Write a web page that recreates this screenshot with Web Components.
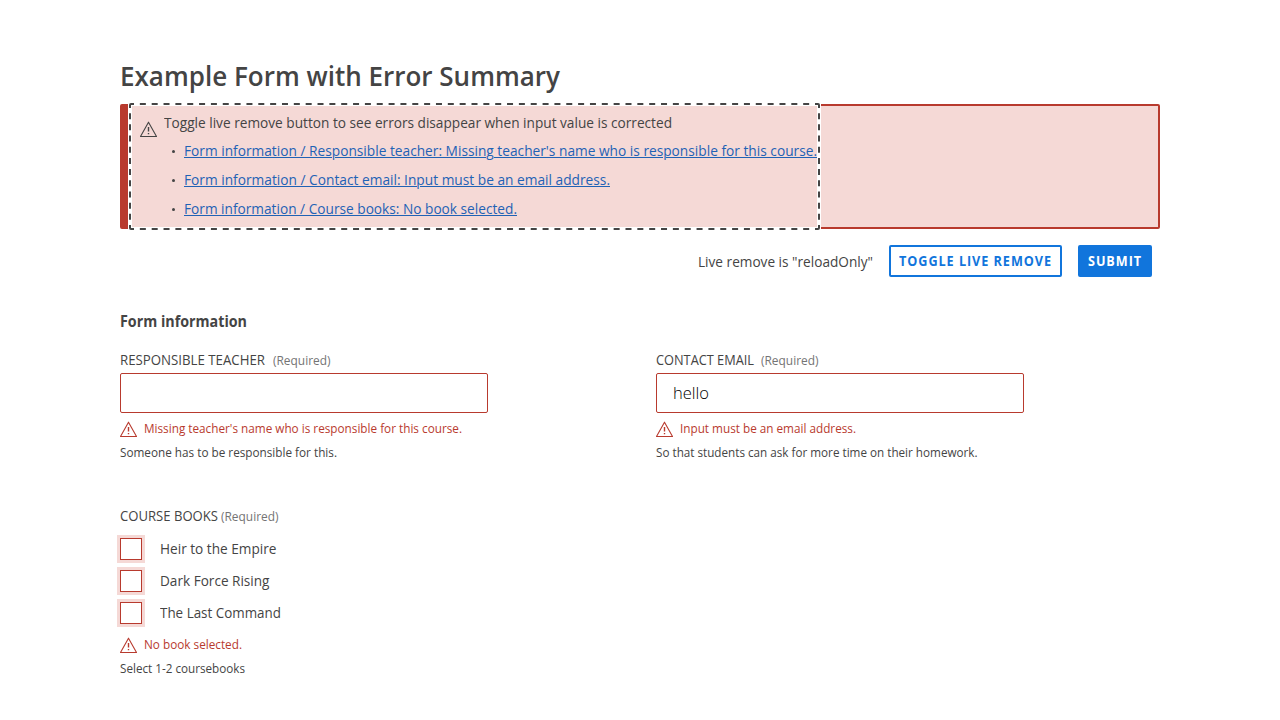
<!DOCTYPE html>
<html lang="en">
<head>
<meta charset="utf-8">
<title>Example Form with Error Summary</title>
<style>
  :root { --ink:#444; --red:#b83a2e; --pink:#f5d9d6; --blue:#1175dc; --link:#1f62b5; --muted:#747474; }
  body { margin:0; background:#fff; color:var(--ink); font-family:"Open Sans","Noto Sans",sans-serif; }
</style>
</head>
<body>
<form-page></form-page>
<script>
const define = (name, html, setup) => {
  const t = document.createElement('template');
  t.innerHTML = html;
  customElements.define(name, class extends HTMLElement {
    connectedCallback() {
      if (this.shadowRoot) return;
      this.attachShadow({ mode:'open' }).append(t.content.cloneNode(true));
      if (setup) setup(this, this.shadowRoot);
    }
  });
};

/* Text set to a given measure by adjusting its horizontal scale. */
define('fit-text', `
  <style>
    :host { display:inline-block; white-space:nowrap; font-size:14px; flex:none }
    span { display:inline-block; transform-origin:0 50% }
    :host([underline]) span { text-decoration:underline; text-decoration-thickness:1px; text-underline-offset:1px }
  </style><span><slot></slot></span>`, (host, root) => {
    const w = +host.getAttribute('w'), s = root.querySelector('span');
    const natural = s.getBoundingClientRect().width;
    if (natural) s.style.transform = `scaleX(${w / natural})`;
    host.style.width = w + 'px';
});

define('warning-icon', `
  <style>:host { display:block; width:17px; height:16px; flex:none } svg { display:block }</style>
  <svg width="17" height="16" viewBox="0 0 17 16" fill="none" stroke="currentColor">
    <path d="M8.5 1.2 .5 15.5H16.5Z" stroke-linejoin="round" stroke-width="1.1"/>
    <path d="M8.5 6V10.4M8.5 12V13.2" stroke-width="1.4"/>
  </svg>`);

define('summary-link', `
  <style>
    :host { display:flex; align-items:center; height:29px; line-height:29px }
    i { width:3px; height:3px; border-radius:50%; background:var(--ink); margin:2px 9px 0 0; flex:none }
    a { color:var(--link); text-decoration:none }
  </style><i></i><a href="#"><slot></slot></a>`);

define('error-summary', `
  <style>
    :host { display:block; box-sizing:border-box; height:125px; border:2px solid var(--red); border-left-width:8px; border-radius:2px; background:var(--pink) }
    .focus { position:relative; box-sizing:border-box; margin-left:4px; width:685px; height:121px; padding:5px 0 0 8px; display:flex; gap:7px; align-items:flex-start;
      background:var(--pink); box-shadow:0 0 0 4px #fff }
    .ring { position:absolute; left:-3px; top:-3px; fill:none; stroke:var(--ink); stroke-width:2 }
    warning-icon { margin-top:10px }
    .msg { display:flex; height:25px; line-height:23px }
    .list { padding-left:8px }
  </style>
  <div class="focus">
    <svg class="ring" width="691" height="127" viewBox="0 0 691 127">
      <path d="M2 1H689M2 126H689" stroke-dasharray="6 5.845" stroke-dashoffset="3"/>
      <path d="M1 2V125M690 2V125" stroke-dasharray="6 5.182" stroke-dashoffset="3"/>
      <path d="M1 2A1 1 0 0 1 2 1M689 1A1 1 0 0 1 690 2M690 125A1 1 0 0 1 689 126M2 126A1 1 0 0 1 1 125"/>
    </svg>
    <warning-icon></warning-icon>
    <div><div class="msg"><slot name="message"></slot></div><div class="list"><slot></slot></div></div>
  </div>`);

define('action-button', `
  <style>
    :host { display:block }
    button { font:700 13.5px/28px "Open Sans","Noto Sans",sans-serif; letter-spacing:1px; box-sizing:border-box; display:block; height:32px; width:100%; padding:0 0 0 8px; text-align:left;
      border:2px solid var(--blue); border-radius:2px; color:var(--blue); background:#fff }
    :host([primary]) button { color:#fff; background:var(--blue) }
    ::slotted(fit-text) { font-size:13.5px }
  </style><button><slot></slot></button>`);

define('field-label', `
  <style>
    :host { display:flex; align-items:baseline; height:24px; line-height:24px; gap:var(--gap,8px) }
    .r { color:var(--muted); font-size:12px }
  </style><slot></slot><fit-text class="r" w="57.5">(Required)</fit-text>`);

define('field-notes', `
  <style>
    :host { display:block; line-height:24px }
    .e, .h { display:flex; height:24px; gap:7px }
    .e { color:var(--red) }
    warning-icon { margin-top:4px }
    ::slotted(*) { font-size:12px }
  </style>
  <div class="e"><warning-icon></warning-icon><slot name="error"></slot></div><div class="h"><slot name="help"></slot></div>`);

define('text-box', `
  <style>
    :host { display:block; box-sizing:border-box; width:368px; height:40px; border:1px solid var(--red); border-radius:2px; padding-left:16px; line-height:39px; color:#000; margin:1px 0 4px }
    ::slotted(*) { font-size:16px; font-weight:300 }
  </style><slot></slot>`);

define('check-option', `
  <style>
    :host { display:flex; align-items:center; height:32px; line-height:32px; gap:18px }
    i { box-sizing:border-box; width:22px; height:22px; border:1px solid var(--red); background:#fff; box-shadow:0 0 0 3px var(--pink) }
  </style><i></i><slot></slot>`);

define('form-page', `
  <style>
    :host { display:block; box-sizing:border-box; width:1280px; height:720px; padding:58px 120px 0; overflow:hidden }
    h1,h2 { margin:0; display:flex }
    h1 { height:37px; line-height:36px; margin-bottom:9px; font-weight:600 }
    h1 fit-text { font-size:27.5px }
    .actions { display:flex; justify-content:flex-end; gap:16px; margin:16px 8px 0 0; line-height:34px; height:32px }
    h2 { height:24px; line-height:24px; margin:32px 0 15px; font-weight:700 }
    h2 fit-text { font-size:15.5px }
    .row { display:grid; grid-template-columns:536px 1fr }
    .books { margin-top:39px; --gap:3px }
    .options { margin:5px 0 4px }
  </style>
  <h1><fit-text w="440">Example Form with Error Summary</fit-text></h1>
  <error-summary>
    <fit-text slot="message" w="508">Toggle live remove button to see errors disappear when input value is corrected</fit-text>
    <summary-link><fit-text underline w="633">Form information / Responsible teacher: Missing teacher's name who is responsible for this course.</fit-text></summary-link>
    <summary-link><fit-text underline w="426">Form information / Contact email: Input must be an email address.</fit-text></summary-link>
    <summary-link><fit-text underline w="333">Form information / Course books: No book selected.</fit-text></summary-link>
  </error-summary>
  <div class="actions">
    <fit-text w="175">Live remove is "reloadOnly"</fit-text>
    <action-button style="width:173px"><fit-text w="153">TOGGLE LIVE REMOVE</fit-text></action-button>
    <action-button primary style="width:74px"><fit-text w="54">SUBMIT</fit-text></action-button>
  </div>
  <h2><fit-text w="127">Form information</fit-text></h2>
  <div class="row">
    <div>
      <field-label><fit-text w="145">RESPONSIBLE TEACHER</fit-text></field-label>
      <text-box></text-box>
      <field-notes><fit-text slot="error" w="318">Missing teacher's name who is responsible for this course.</fit-text><fit-text slot="help" w="217">Someone has to be responsible for this.</fit-text></field-notes>
    </div>
    <div>
      <field-label style="--gap:7px"><fit-text w="98">CONTACT EMAIL</fit-text></field-label>
      <text-box><fit-text w="36">hello</fit-text></text-box>
      <field-notes><fit-text slot="error" w="176">Input must be an email address.</fit-text><fit-text slot="help" w="321.5">So that students can ask for more time on their homework.</fit-text></field-notes>
    </div>
  </div>
  <div class="books">
    <field-label><fit-text w="98">COURSE BOOKS</fit-text></field-label>
    <div class="options">
      <check-option><fit-text w="116.5">Heir to the Empire</fit-text></check-option>
      <check-option><fit-text w="109.5">Dark Force Rising</fit-text></check-option>
      <check-option><fit-text w="121">The Last Command</fit-text></check-option>
    </div>
    <field-notes><fit-text slot="error" w="98">No book selected.</fit-text><fit-text slot="help" w="125">Select 1-2 coursebooks</fit-text></field-notes>
  </div>`);
</script>
</body>
</html>
